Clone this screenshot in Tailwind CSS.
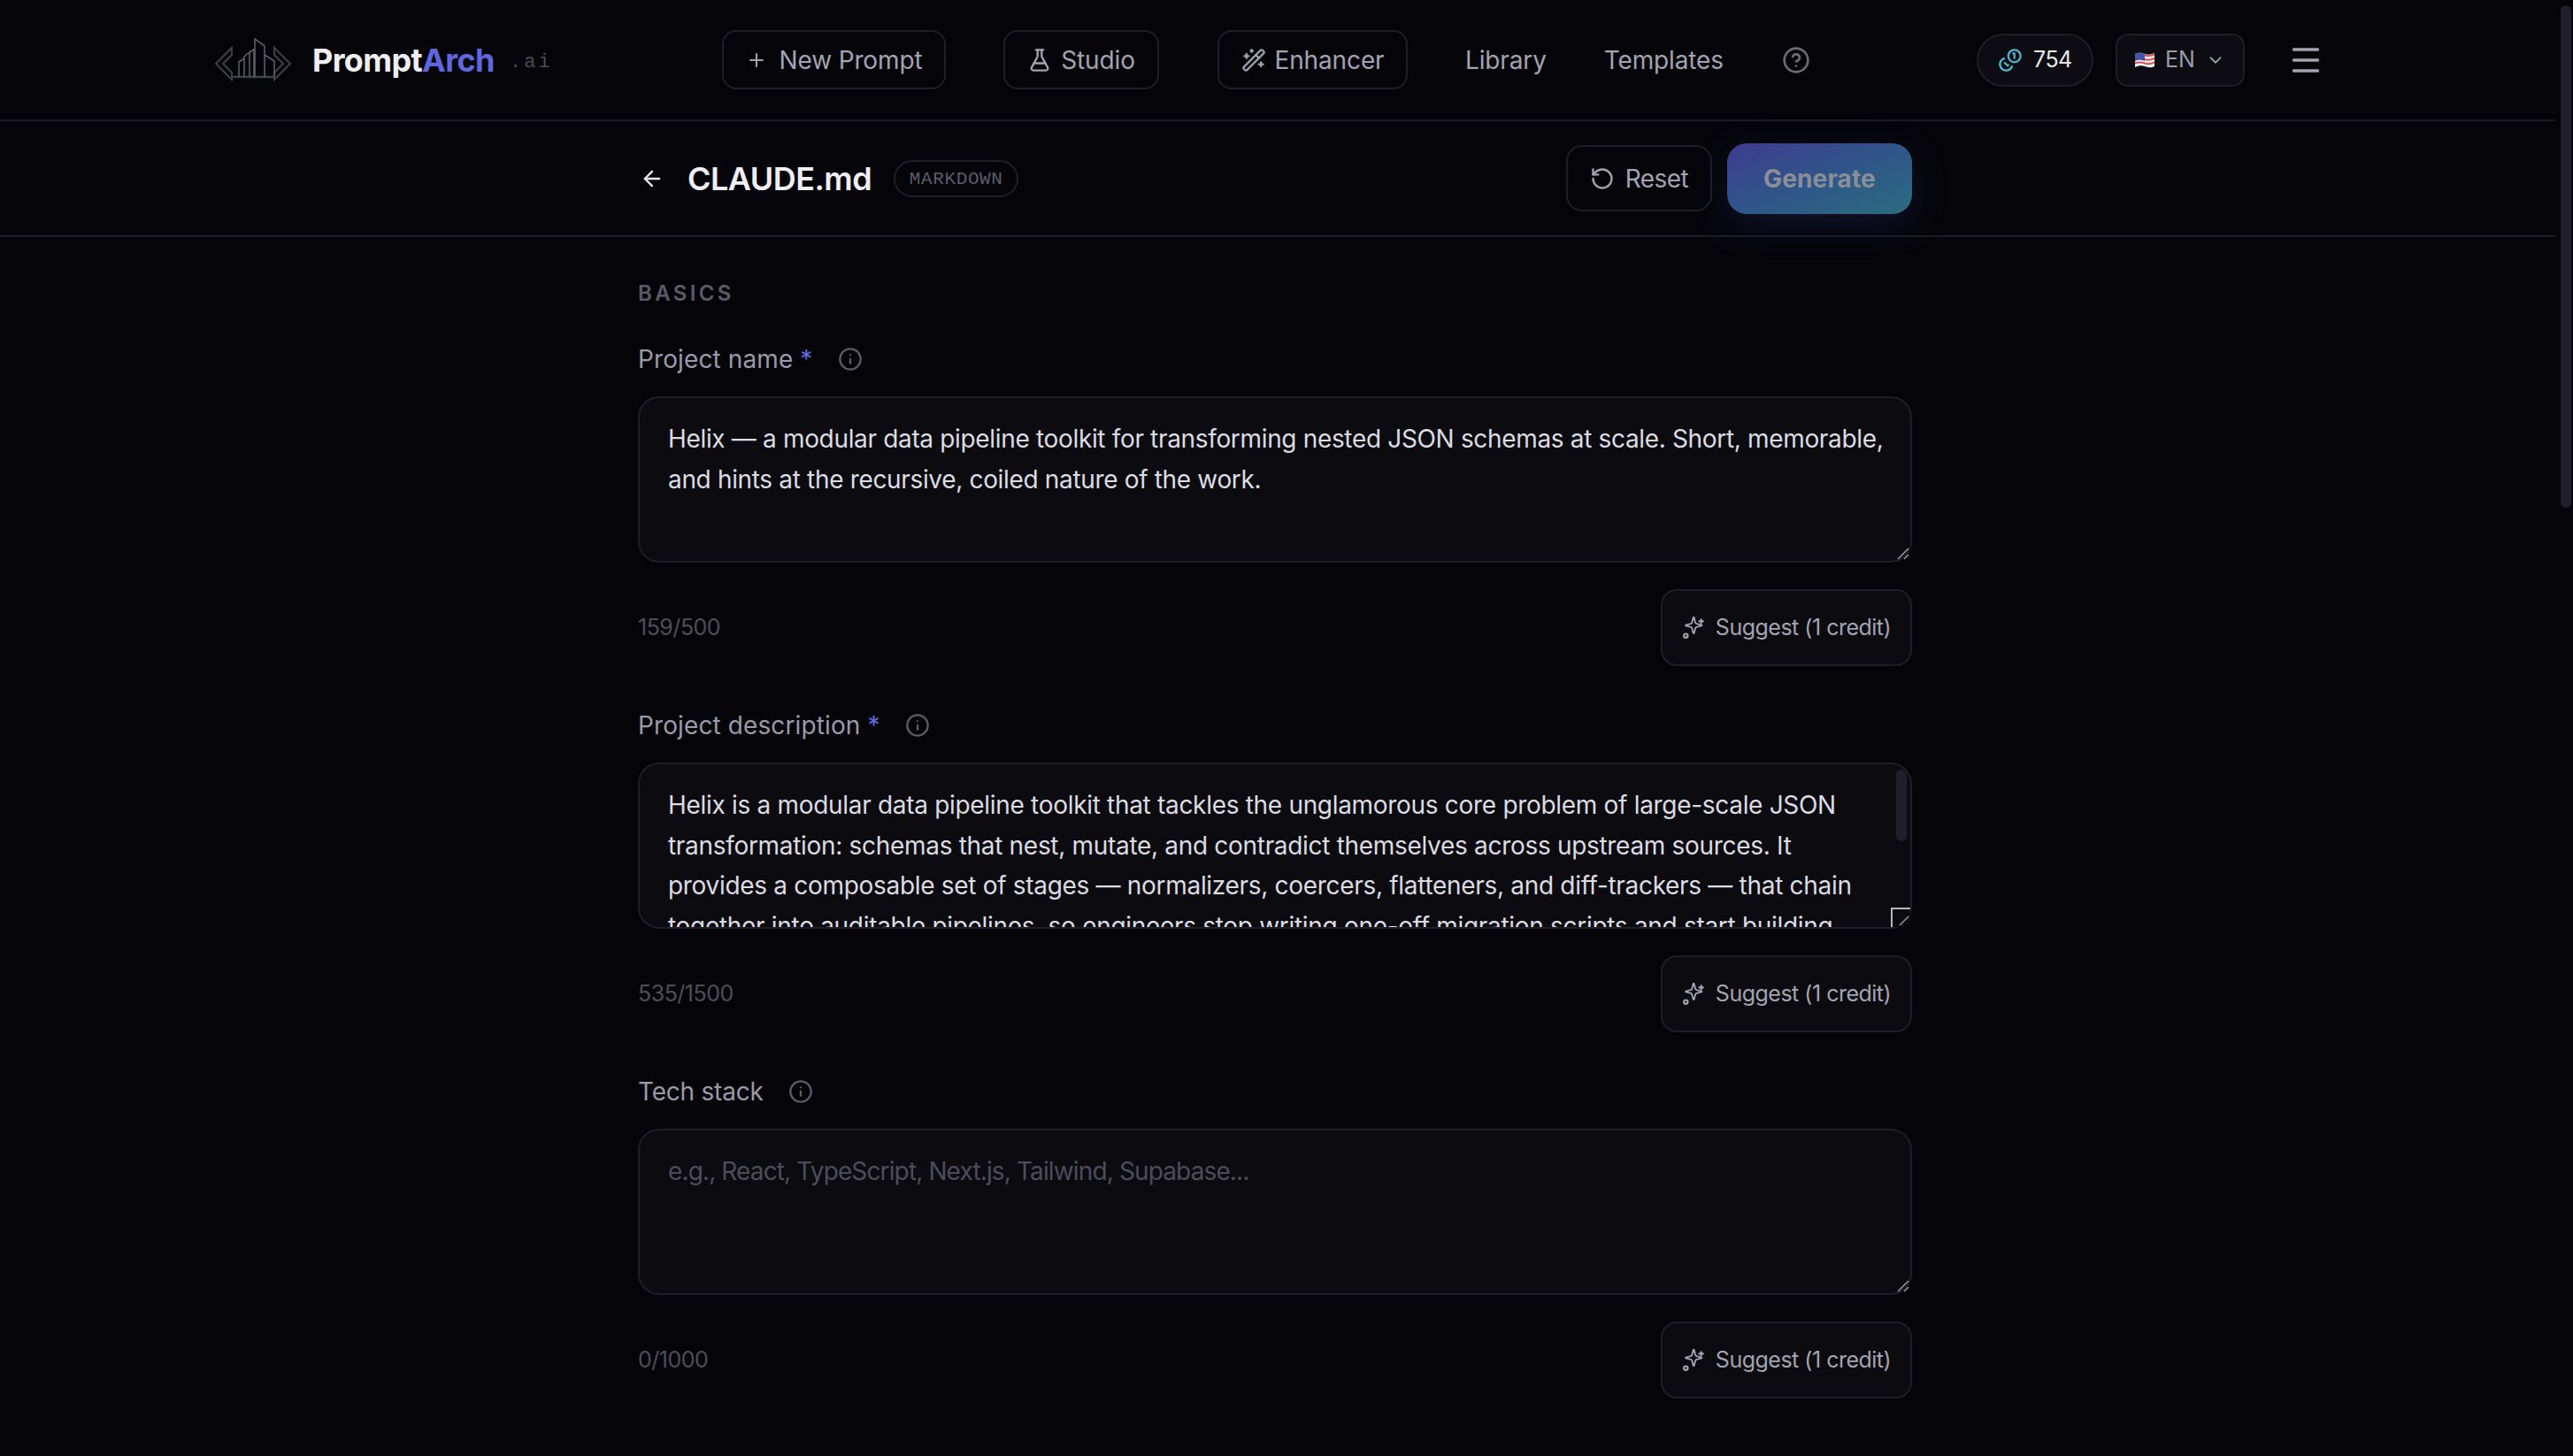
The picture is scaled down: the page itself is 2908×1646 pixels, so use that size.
<!doctype html>
<html lang="en">
<head>
<meta charset="utf-8">
<title>PromptArch</title>
<script src="https://cdn.jsdelivr.net/npm/@tailwindcss/browser@4"></script>
</head>
<body class="bg-[#050509] font-['Inter','Liberation_Sans',sans-serif] overflow-hidden">
<div class="flex h-[1646px] w-[2908px] overflow-hidden">
  <div class="w-[2888px] shrink-0">
    <header class="flex h-[137px] items-center border-b-2 border-[#1c1c25] pl-[241px]">
      <svg class="h-[52px] w-[90px] shrink-0" viewBox="0 0 90 52" fill="none" stroke="#3f4048" stroke-width="2">
        <path d="M21 12 3 30l18 18V40L11 30l10-10z" />
        <path d="M69 12l18 18-18 18V40l10-10-10-10z" />
        <path d="M22 45h46" stroke-width="2.5" />
        <path d="M29 45V28l6-4v21M35 45V22l6-5v28M41 17l5-3v31M47 45V2l11 8v35M58 20l11 7v18" stroke="#5a5c66" stroke-width="1.6"/>
      </svg>
      <div class="ml-[22px] w-[206px] text-[36px] font-bold leading-none tracking-[-0.018em] text-[#eeeef3]">Prompt<span class="text-[#5f66de]">Arch</span></div>
      <div class="ml-[17px] mt-[6px] w-[45px] font-['Liberation_Mono',monospace] text-[22px] tracking-[0.14em] text-[#4b4b57]">.ai</div>
      <nav class="ml-[195px] flex items-center text-[28px] tracking-[-0.005em] text-[#a3a3b2]">
        <a class="flex h-[67px] w-[253px] items-center justify-center gap-[14px] rounded-[16px] border-2 border-[#1e1e28]">
          <svg class="size-[24px]" viewBox="0 0 24 24" fill="none" stroke="currentColor" stroke-width="2" stroke-linecap="round" stroke-linejoin="round"><path d="M5 12h14M12 5v14"/></svg>New Prompt</a>
        <a class="ml-[65px] flex h-[67px] w-[176px] items-center justify-center gap-[10px] rounded-[16px] border-2 border-[#1e1e28]">
          <svg class="size-[28px]" viewBox="0 0 24 24" fill="none" stroke="currentColor" stroke-width="2" stroke-linecap="round" stroke-linejoin="round"><path d="M14 2v6a2 2 0 0 0 .245.96l5.51 10.08A2 2 0 0 1 18 22H6a2 2 0 0 1-1.755-2.96l5.51-10.08A2 2 0 0 0 10 8V2"/><path d="M6.453 15h11.094"/><path d="M8.5 2h7"/></svg>Studio</a>
        <a class="ml-[66px] flex h-[67px] w-[215px] items-center justify-center gap-[10px] rounded-[16px] border-2 border-[#1e1e28]">
          <svg class="size-[28px]" viewBox="0 0 24 24" fill="none" stroke="currentColor" stroke-width="2" stroke-linecap="round" stroke-linejoin="round"><path d="m21.64 3.64-1.28-1.28a1.21 1.21 0 0 0-1.72 0L2.36 18.64a1.21 1.21 0 0 0 0 1.72l1.28 1.28a1.2 1.2 0 0 0 1.72 0L21.64 5.36a1.2 1.2 0 0 0 0-1.72"/><path d="m14 7 3 3"/><path d="M5 6v4"/><path d="M19 14v4"/><path d="M10 2v2"/><path d="M7 8H3"/><path d="M21 16h-4"/><path d="M11 3H9"/></svg>Enhancer</a>
        <a class="ml-[65px]">Library</a>
        <a class="ml-[65px]">Templates</a>
        <svg class="ml-[66px] size-[32px] text-[#6b6b78]" viewBox="0 0 24 24" fill="none" stroke="currentColor" stroke-width="2" stroke-linecap="round" stroke-linejoin="round"><circle cx="12" cy="12" r="10"/><path d="M9.09 9a3 3 0 0 1 5.83 1c0 2-3 3-3 3"/><path d="M12 17h.01"/></svg>
      </nav>
      <div class="ml-[188px] flex h-[60px] w-[132px] items-center justify-center gap-[12px] rounded-full border-2 border-[#1e1e28] bg-[#0c0c12] text-[25px] tracking-[-0.02em] text-[#e8e8ee]">
        <svg class="size-[28px] text-[#4fb3c8]" viewBox="0 0 24 24" fill="none" stroke="currentColor" stroke-width="2" stroke-linecap="round" stroke-linejoin="round"><g transform="rotate(90 12 12)"><circle cx="8" cy="8" r="6"/><path d="M18.09 10.37A6 6 0 1 1 10.34 18"/></g><path d="M15 5.5h1v4.5"/><path d="M10.1 16.7l-.7.7-2.8-2.8"/></svg>754</div>
      <div class="ml-[25px] flex h-[60px] w-[146px] items-center justify-center gap-[12px] rounded-[14px] border-2 border-[#1e1e28] bg-[#0c0c12] text-[25px] text-[#9a9aa8]">
        <svg class="h-[18px] w-[22px]" viewBox="0 0 22 18"><path d="M0 2c4-2 8-1 11 0s7 1 11-1v15c-4 2-8 1-11 0s-7-1-11 1z" fill="#eee"/><path d="M0 3.5c4-2 8-1 11 0s7 1 11-1M0 8c4-2 8-1 11 0s7 1 11-1M0 12.5c4-2 8-1 11 0s7 1 11-1" fill="none" stroke="#d8505a" stroke-width="2"/><path d="M0 2c4-2 8-1 11 0v8c-3-1-7-2-11 0z" fill="#3f55a8"/></svg>EN
        <svg class="size-[22px]" viewBox="0 0 24 24" fill="none" stroke="currentColor" stroke-width="2" stroke-linecap="round" stroke-linejoin="round"><path d="m6 9 6 6 6-6"/></svg>
      </div>
      <svg class="ml-[54px] h-[30px] w-[30px] text-[#a3a3b2]" viewBox="0 0 30 30" fill="none" stroke="currentColor" stroke-width="3.4" stroke-linecap="round"><path d="M1.5 3h27M1.5 15h27M1.5 27h27"/></svg>
    </header>
    <div class="border-b-2 border-[#1c1c25]">
      <div class="ml-[721px] flex h-[129px] w-[1440px] items-center">
        <svg class="ml-[2px] size-[28px] text-[#e8e8ee]" viewBox="0 0 24 24" fill="none" stroke="currentColor" stroke-width="2" stroke-linecap="round" stroke-linejoin="round"><path d="m12 19-7-7 7-7"/><path d="M19 12H5"/></svg>
        <h1 class="ml-[26px] text-[36px] font-semibold tracking-[-0.015em] text-[#eeeef3]">CLAUDE.md</h1>
        <span class="ml-[25px] flex h-[42px] w-[141px] items-center justify-center rounded-full border-2 border-[#1e1e28] pt-[2px] font-['Liberation_Mono',monospace] text-[21px] tracking-[0.03em] text-[#5c5c6a]">MARKDOWN</span>
        <button class="ml-auto flex h-[75px] w-[165px] items-center justify-center gap-[12px] rounded-[18px] border-2 border-[#1e1e28] text-[28px] tracking-[-0.02em] text-[#a3a3b2]">
          <svg class="size-[28px]" viewBox="0 0 24 24" fill="none" stroke="currentColor" stroke-width="2" stroke-linecap="round" stroke-linejoin="round"><path d="M3 12a9 9 0 1 0 9-9 9.75 9.75 0 0 0-6.74 2.74L3 8"/><path d="M3 3v5h5"/></svg>Reset</button>
        <button class="ml-[17px] h-[80px] w-[209px] rounded-[22px] bg-linear-to-br from-[#3d3a8f] via-[#2f5588] to-[#2b6c80] text-[28px] font-bold tracking-[0.005em] text-[#8a8e98] shadow-[0_12px_40px_rgba(60,70,170,0.22)]">Generate</button>
      </div>
    </div>
    <main class="ml-[721px] w-[1440px]">
      <h2 class="mt-[52px] h-[24px] text-[24px] leading-[24px] font-semibold tracking-[0.14em] text-[#5a5a68]">BASICS</h2>

      <section class="mt-[42px]">
        <label class="flex h-[40px] items-center text-[28px] tracking-[0.004em] text-[#9a9aa8]">Project name<span class="ml-[8px] text-[#5f66de]">*</span>
          <svg class="ml-[28px] size-[28px] text-[#5a5a68]" viewBox="0 0 24 24" fill="none" stroke="currentColor" stroke-width="2" stroke-linecap="round" stroke-linejoin="round"><circle cx="12" cy="12" r="10"/><path d="M12 16v-4"/><path d="M12 8h.01"/></svg></label>
        <div class="relative mt-[22px]">
          <textarea readonly class="block h-[188px] w-full resize-none rounded-[24px] border-2 border-[#1e1e28] bg-[#0b0b10] py-[24px] pl-[32px] pr-[16px] text-[28px] leading-[45.5px] tracking-[-0.012em] text-[#dcdce2] outline-none">Helix — a modular data pipeline toolkit for transforming nested JSON schemas at scale. Short, memorable,
and hints at the recursive, coiled nature of the work.</textarea>
          <svg class="absolute bottom-[3px] right-[3px] size-[14px] text-[#9a9aa2]" viewBox="0 0 14 14" fill="none" stroke="currentColor" stroke-width="1.5"><path d="M1 13 13 1M8 13l5-5"/></svg>
        </div>
        <div class="mt-[30px] flex items-center justify-between">
          <span class="text-[25px] tracking-[-0.02em] text-[#4d4d5a]">159/500</span>
          <button class="flex h-[87px] w-[284px] items-center justify-center gap-[12px] rounded-[18px] border-2 border-[#1e1e28] bg-[#0b0b10] text-[25px] tracking-[-0.02em] text-[#a3a3b2]">
            <svg class="size-[26px]" viewBox="0 0 24 24" fill="none" stroke="currentColor" stroke-width="2" stroke-linecap="round" stroke-linejoin="round"><path d="M9.937 15.5A2 2 0 0 0 8.5 14.063l-6.135-1.582a.5.5 0 0 1 0-.962L8.5 9.936A2 2 0 0 0 9.937 8.5l1.582-6.135a.5.5 0 0 1 .963 0L14.063 8.5A2 2 0 0 0 15.5 9.937l6.135 1.581a.5.5 0 0 1 0 .964L15.5 14.063a2 2 0 0 0-1.437 1.437l-1.582 6.135a.5.5 0 0 1-.963 0z" transform="translate(2 -1) scale(.85)"/><path d="M20 3v4M22 5h-4"/><circle cx="4" cy="20" r="2"/></svg>Suggest (1 credit)</button>
        </div>
      </section>

      <section class="mt-[47px]">
        <label class="flex h-[40px] items-center text-[28px] tracking-[0.004em] text-[#9a9aa8]">Project description<span class="ml-[8px] text-[#5f66de]">*</span>
          <svg class="ml-[28px] size-[28px] text-[#5a5a68]" viewBox="0 0 24 24" fill="none" stroke="currentColor" stroke-width="2" stroke-linecap="round" stroke-linejoin="round"><circle cx="12" cy="12" r="10"/><path d="M12 16v-4"/><path d="M12 8h.01"/></svg></label>
        <div class="relative mt-[22px]">
          <textarea readonly class="block h-[188px] w-full resize-none overflow-hidden rounded-[24px] border-2 border-[#1e1e28] bg-[#0b0b10] px-[32px] py-[24px] text-[28px] leading-[45.5px] tracking-[-0.011em] text-[#dcdce2] outline-none">Helix is a modular data pipeline toolkit that tackles the unglamorous core problem of large-scale JSON
transformation: schemas that nest, mutate, and contradict themselves across upstream sources. It
provides a composable set of stages — normalizers, coercers, flatteners, and diff-trackers — that chain
together into auditable pipelines, so engineers stop writing one-off migration scripts and start building
reusable, versioned data flows that stay readable as the schemas change underneath them over time.</textarea>
          <div class="absolute right-[6px] top-[8px] h-[81px] w-[12px] rounded-full bg-[#1f1f2b]"></div>
          <div class="absolute bottom-[2px] right-[2px] size-[22px] border-l-2 border-t-2 border-[#b9b9c0] bg-[#0b0b10]"></div>
          <svg class="absolute bottom-[3px] right-[3px] size-[14px] text-[#9a9aa2]" viewBox="0 0 14 14" fill="none" stroke="currentColor" stroke-width="1.5"><path d="M3 13 13 3"/></svg>
        </div>
        <div class="mt-[30px] flex items-center justify-between">
          <span class="text-[25px] tracking-[-0.02em] text-[#4d4d5a]">535/1500</span>
          <button class="flex h-[87px] w-[284px] items-center justify-center gap-[12px] rounded-[18px] border-2 border-[#1e1e28] bg-[#0b0b10] text-[25px] tracking-[-0.02em] text-[#a3a3b2]">
            <svg class="size-[26px]" viewBox="0 0 24 24" fill="none" stroke="currentColor" stroke-width="2" stroke-linecap="round" stroke-linejoin="round"><path d="M9.937 15.5A2 2 0 0 0 8.5 14.063l-6.135-1.582a.5.5 0 0 1 0-.962L8.5 9.936A2 2 0 0 0 9.937 8.5l1.582-6.135a.5.5 0 0 1 .963 0L14.063 8.5A2 2 0 0 0 15.5 9.937l6.135 1.581a.5.5 0 0 1 0 .964L15.5 14.063a2 2 0 0 0-1.437 1.437l-1.582 6.135a.5.5 0 0 1-.963 0z" transform="translate(2 -1) scale(.85)"/><path d="M20 3v4M22 5h-4"/><circle cx="4" cy="20" r="2"/></svg>Suggest (1 credit)</button>
        </div>
      </section>

      <section class="mt-[47px]">
        <label class="flex h-[40px] items-center text-[28px] tracking-[-0.008em] text-[#9a9aa8]">Tech stack
          <svg class="ml-[28px] size-[28px] text-[#5a5a68]" viewBox="0 0 24 24" fill="none" stroke="currentColor" stroke-width="2" stroke-linecap="round" stroke-linejoin="round"><circle cx="12" cy="12" r="10"/><path d="M12 16v-4"/><path d="M12 8h.01"/></svg></label>
        <div class="relative mt-[22px]">
          <textarea placeholder="e.g., React, TypeScript, Next.js, Tailwind, Supabase..." class="block h-[188px] w-full resize-none rounded-[24px] border-2 border-[#1e1e28] bg-[#0b0b10] px-[32px] py-[24px] text-[28px] leading-[45.5px] tracking-[-0.031em] text-[#dcdce2] outline-none placeholder:text-[#4d4d5a]"></textarea>
          <svg class="absolute bottom-[3px] right-[3px] size-[14px] text-[#9a9aa2]" viewBox="0 0 14 14" fill="none" stroke="currentColor" stroke-width="1.5"><path d="M1 13 13 1M8 13l5-5"/></svg>
        </div>
        <div class="mt-[30px] flex items-center justify-between">
          <span class="text-[25px] tracking-[-0.02em] text-[#4d4d5a]">0/1000</span>
          <button class="flex h-[87px] w-[284px] items-center justify-center gap-[12px] rounded-[18px] border-2 border-[#1e1e28] bg-[#0b0b10] text-[25px] tracking-[-0.02em] text-[#a3a3b2]">
            <svg class="size-[26px]" viewBox="0 0 24 24" fill="none" stroke="currentColor" stroke-width="2" stroke-linecap="round" stroke-linejoin="round"><path d="M9.937 15.5A2 2 0 0 0 8.5 14.063l-6.135-1.582a.5.5 0 0 1 0-.962L8.5 9.936A2 2 0 0 0 9.937 8.5l1.582-6.135a.5.5 0 0 1 .963 0L14.063 8.5A2 2 0 0 0 15.5 9.937l6.135 1.581a.5.5 0 0 1 0 .964L15.5 14.063a2 2 0 0 0-1.437 1.437l-1.582 6.135a.5.5 0 0 1-.963 0z" transform="translate(2 -1) scale(.85)"/><path d="M20 3v4M22 5h-4"/><circle cx="4" cy="20" r="2"/></svg>Suggest (1 credit)</button>
        </div>
      </section>
    </main>
  </div>
  <div class="w-[20px] pl-[6px] pt-[6px]">
    <div class="h-[568px] w-[12px] rounded-full bg-[#1f1f2b]"></div>
  </div>
</div>
</body>
</html>
